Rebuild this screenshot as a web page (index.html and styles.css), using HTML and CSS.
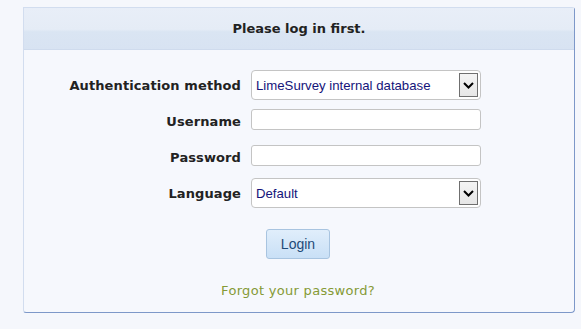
FILE: index.html
```html
<!DOCTYPE html>
<html lang="en">
  <head>
    <meta charset="UTF-8" />
    <meta name="viewport" content="width=device-width, initial-scale=1.0" />
    <title>Login</title>
    <link rel="stylesheet" href="styles.css">
  </head>
  <body>
    <div class="login-box">
      <div class="login-header">Please log in first.</div>

      <form class="login-form" onsubmit="return false">
        <div class="fields">
          <label for="authMethod">Authentication method</label>
          <div class="select-wrap">
            <select id="authMethod">
              <option>LimeSurvey internal database</option>
            </select>
            <span class="select-arrow">
              <svg width="11" height="7" viewBox="0 0 11 7">
                <path d="M1 1 L5.5 5.5 L10 1" fill="none" stroke="#000" stroke-width="2" />
              </svg>
            </span>
          </div>

          <label for="user">Username</label>
          <input type="text" id="user" />

          <label for="password">Password</label>
          <input type="password" id="password" />

          <label for="lang">Language</label>
          <div class="select-wrap">
            <select id="lang">
              <option>Default</option>
            </select>
            <span class="select-arrow">
              <svg width="11" height="7" viewBox="0 0 11 7">
                <path d="M1 1 L5.5 5.5 L10 1" fill="none" stroke="#000" stroke-width="2" />
              </svg>
            </span>
          </div>
        </div>

        <div class="actions">
          <button type="submit" class="login-btn">Login</button>
        </div>

        <p class="forgot"><a href="#">Forgot your password?</a></p>
      </form>
    </div>
  </body>
</html>
```

FILE: styles.css
```css
body {
  margin: 0;
  padding: 7px 6px 0 23px;
  background-color: #f5f7fc;
  font-family: "DejaVu Sans", Verdana, sans-serif;
  font-size: 13px;
  color: #222;
}

.login-box {
  width: 550px;
  height: 304px;
  border: 1px solid #7d98c9;
  border-top-color: #d2ddef;
  border-left-color: #d2ddef;
  border-radius: 0 3px 4px 3px;
  background-color: #f6f8fd;
}

.login-header {
  height: 41px;
  line-height: 42px;
  text-align: center;
  font-weight: bold;
  color: #222;
  border-bottom: 1px solid #cfdbed;
  background: linear-gradient(#e8eef8 0, #e5ecf6 52%, #dae5f3 58%, #d8e3f2 100%);
}

.login-form {
  margin: 0;
  padding-top: 17px;
}

.fields {
  display: grid;
  grid-template-columns: 217px 230px;
  grid-auto-rows: 36px;
  column-gap: 10px;
  align-items: center;
}

.fields label {
  text-align: right;
  font-weight: bold;
  line-height: 16px;
  padding-top: 1px;
  color: #222;
  letter-spacing: 0.1px;
}

.fields input {
  box-sizing: border-box;
  width: 230px;
  height: 21px;
  margin: 0 0 3px;
  border: 1px solid #c4c4c4;
  border-radius: 3px;
  background: #fff;
}

.select-wrap {
  position: relative;
  height: 30px;
}

.select-wrap select {
  appearance: none;
  box-sizing: border-box;
  width: 230px;
  height: 30px;
  margin: 0;
  padding: 0 0 0 4px;
  border: 1px solid #c4c4c4;
  border-radius: 4px;
  background: #fff;
  font-family: "Liberation Sans", Arial, sans-serif;
  font-size: 13.2px;
  color: #14147a;
}

.select-arrow {
  position: absolute;
  top: 3px;
  right: 3px;
  box-sizing: border-box;
  width: 19px;
  height: 24px;
  border: 1px solid #6f6f6f;
  background: linear-gradient(#f4f4f4, #e6e6e6);
  display: flex;
  align-items: center;
  justify-content: center;
  pointer-events: none;
}

.actions {
  margin-top: 18px;
  text-align: center;
  padding-right: 2px;
}

.login-btn {
  width: 64px;
  height: 30px;
  padding: 0;
  border: 1px solid #a8c4e0;
  border-radius: 3px;
  background: linear-gradient(#e0eefb, #c9e0f6);
  font-family: "Liberation Sans", Arial, sans-serif;
  font-size: 14px;
  color: #1e4a78;
}

.forgot {
  margin: 24px 0 0;
  text-align: center;
  padding-right: 2px;
}

.forgot a {
  color: #859a36;
  text-decoration: none;
  letter-spacing: 0.3px;
}
```
